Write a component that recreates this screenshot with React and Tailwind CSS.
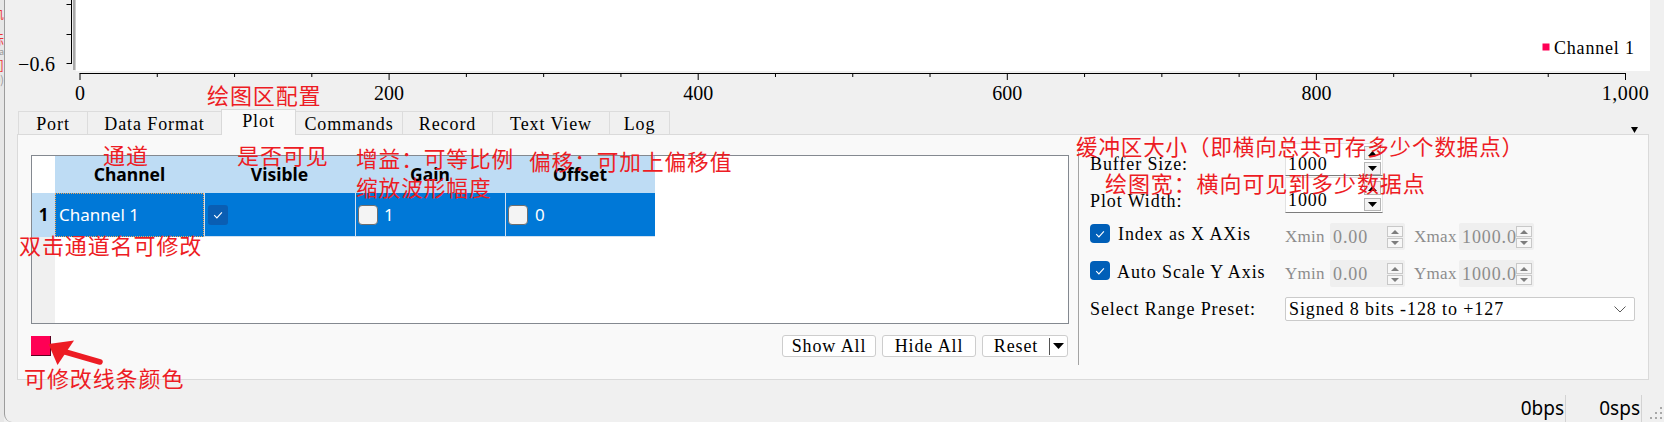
import React from "react";

const SERIF = "font-['Liberation_Serif','Noto_Sans_CJK_SC',serif] tracking-[0.9px]";
const CJK = "font-['Noto_Sans_CJK_SC','Noto_Sans',sans-serif]";
const SANS = "font-['Noto_Sans','Noto_Sans_CJK_SC',sans-serif]";

function Tri({ dir = "down", color = "#000", w = 9, h = 5 }) {
  const pts = dir === "down" ? `0,0 ${w},0 ${w / 2},${h}` : `0,${h} ${w},${h} ${w / 2},0`;
  return (
    <svg width={w} height={h} viewBox={`0 0 ${w} ${h}`}>
      <polygon points={pts} fill={color} />
    </svg>
  );
}

function Check({ children }) {
  return (
    <svg viewBox="0 0 20 20" width="20" height="20">
      <path d="M6.2 10.2 L8.9 12.9 L13.9 7.4" fill="none" stroke="#fff" strokeWidth="1.1" />
      {children}
    </svg>
  );
}

function Chart() {
  const ticks = Array.from({ length: 21 }, (_, i) => 80 + i * 77.275);
  const labels = ["0", "200", "400", "600", "800", "1,000"];
  return (
    <svg width="1659" height="109" viewBox="5 0 1659 109" className="block shrink-0">
      <rect x="76" y="0" width="1574" height="71" fill="#fff" />
      <rect x="73" y="0" width="2.5" height="70" fill="#a9a9a9" />
      <line x1="71.5" y1="0" x2="71.5" y2="64" stroke="#000" strokeWidth="1" />
      {[4.5, 34.5, 63.5].map((y) => (
        <line key={y} x1="66.5" y1={y} x2="72" y2={y} stroke="#000" strokeWidth="1" />
      ))}
      <text x="18" y="71" fontFamily="Liberation Serif" fontSize="20" textLength="38" lengthAdjust="spacing">
        −0.6
      </text>
      <line x1="79.5" y1="73.5" x2="1626" y2="73.5" stroke="#000" strokeWidth="1" />
      {ticks.map((x, i) => (
        <line key={i} x1={x} y1="73.5" x2={x} y2={i % 4 === 0 ? 80 : 77} stroke="#000" strokeWidth="1" />
      ))}
      {labels.map((t, i) => (
        <text
          key={t}
          x={ticks[i * 4]}
          y="100"
          textAnchor="middle"
          fontFamily="Liberation Serif"
          fontSize="20"
          letterSpacing={i === 5 ? "0.5" : "0"}
        >
          {t}
        </text>
      ))}
      <rect x="1542.5" y="43.5" width="7" height="7" fill="#ff0055" />
      <text x="1554" y="53.5" fontFamily="Liberation Serif" fontSize="18" letterSpacing="0.8">
        Channel 1
      </text>
    </svg>
  );
}

function Tab({ label, w, active, first }) {
  if (active) {
    return (
      <div
        className={`${w} h-[26px] -mb-[1px] relative z-10 bg-[#f9f9f9] border-t border-r border-l -ml-px border-[#d9d9d9] flex justify-center pt-[2px] leading-[18px] ${SERIF} text-[18px]`}
      >
        {label}
      </div>
    );
  }
  return (
    <div
      className={`${w} h-[23px] bg-[#f0f0f0] border-t border-r ${first ? "border-l" : ""} border-[#dcdcdc] flex justify-center pt-[3px] leading-[18px] ${SERIF} text-[18px]`}
    >
      {label}
    </div>
  );
}

function SpinButtons({ gap }) {
  return (
    <div className={`w-[17px] flex flex-col ${gap}`}>
      <div className="h-[14px] bg-[#f3f3f3] border border-[#b5b5b5] flex items-center justify-center">
        <Tri dir="up" w={9} h={5} />
      </div>
      <div className="h-[13px] bg-[#f3f3f3] border border-[#b5b5b5] flex items-center justify-center">
        <Tri dir="down" w={9} h={5} />
      </div>
    </div>
  );
}

function DisabledSpin({ value }) {
  return (
    <div className="w-[75px] h-[27px] bg-[#efefef] rounded-[2px] flex">
      <div className="flex-1 overflow-hidden whitespace-nowrap pl-[3px] pt-[5px] leading-[18px] text-[#8c8c8c]">{value}</div>
      <div className="w-[16px] mr-[2px] pt-[3px] flex flex-col gap-[1px]">
        <div className="h-[11px] bg-[#f7f7f7] border border-[#c8c8c8] flex items-center justify-center">
          <Tri dir="up" color="#7d7d7d" w={8} h={4} />
        </div>
        <div className="h-[10px] bg-[#f7f7f7] border border-[#c8c8c8] flex items-center justify-center">
          <Tri dir="down" color="#7d7d7d" w={8} h={4} />
        </div>
      </div>
    </div>
  );
}

function BlueCheck() {
  return (
    <div className="w-[20px] h-[19px] rounded-[4px] bg-[#005fb8] flex items-center justify-center shrink-0">
      <Check />
    </div>
  );
}

function Btn({ children, w }) {
  return (
    <div className={`${w} h-[22px] bg-white border border-[#cdcdcd] rounded-[3px] flex items-center justify-center leading-[18px]`}>
      {children}
    </div>
  );
}

function Note({ children, pos, size = "text-[22px]" }) {
  return (
    <span className={`absolute ${pos} ${CJK} ${size} leading-none text-[#ed1c24] whitespace-nowrap`}>{children}</span>
  );
}

function RangeLabel({ children, extra = "" }) {
  return (
    <span className={`${extra} w-[45px] mt-[5px] leading-[18px] text-[17px] tracking-[0.3px] text-[#8c8c8c]`}>{children}</span>
  );
}

export default function App() {
  return (
    <div className={`relative w-[1664px] h-[422px] overflow-hidden bg-[#f0f0f0] flex text-black ${SERIF} text-[18px]`}>
      {/* edge of a neighbouring window */}
      <div className={`w-[4px] h-full bg-[#e7e7e7] overflow-hidden flex flex-col items-end ${CJK} text-[13px] leading-[13px] tracking-normal`}>
        <span className="mt-[6px] text-[#e33]">轨</span>
        <span className="mt-[13px] text-[#e33]">标</span>
        <span className="mt-[2px] text-[#999] text-[9px] leading-[9px]">pa</span>
        <span className="mt-[2px] text-[#e33]">]</span>
        <span className="mt-[3px] text-[#999] text-[11px] leading-[11px]">0)</span>
      </div>

      <div className="flex-1 h-full border-l border-[#9c9c9c] rounded-bl-[8px] flex flex-col">
        <Chart />

        {/* tabs */}
        <div className="h-[25px] flex items-end pl-[13px] shrink-0">
          <Tab label="Port" w="w-[70px]" first />
          <Tab label="Data Format" w="w-[134px]" />
          <Tab label="Plot" w="w-[75px]" active />
          <Tab label="Commands" w="w-[107px]" />
          <Tab label="Record" w="w-[90px]" />
          <Tab label="Text View" w="w-[117px]" />
          <Tab label="Log" w="w-[60px]" />
          <div className="ml-auto mr-[26px] mb-[1px] self-end">
            <Tri dir="down" w={7} h={6} />
          </div>
        </div>

        {/* plot settings panel */}
        <div className="ml-[12px] w-[1632px] h-[246px] shrink-0 border border-[#dadada] bg-[#f9f9f9] flex">
          {/* channel table */}
          <div className="w-[1060px] pl-[13px] pt-[20px] flex flex-col">
            <div className="w-[1038px] h-[169px] border border-[#848990] bg-white flex flex-col">
              <div className={`h-[37px] flex ${SANS} tracking-normal text-[17.5px] font-bold`}>
                <div className="w-[23px] bg-white" />
                <div className="w-[149px] bg-[#bedcf4] flex items-center justify-center">Channel</div>
                <div className="w-[151px] bg-[#bedcf4] flex items-center justify-center">Visible</div>
                <div className="w-[150px] bg-[#bedcf4] flex items-center justify-center">Gain</div>
                <div className="w-[150px] bg-[#bedcf4] flex items-center justify-center">Offset</div>
              </div>
              <div className={`h-[44px] flex ${SANS} tracking-normal text-[17px]`}>
                <div className="w-[23px] bg-[#bedcf4] flex items-center justify-center font-bold">1</div>
                <div className="w-[149px] bg-[#0078d7] border border-dotted border-[#f2a65a] flex items-center pl-[3px] text-white">
                  Channel 1
                </div>
                <div className="w-[151px] bg-[#0078d7] border-l border-b border-[#cfe0f1] flex items-center pl-[3px]">
                  <div className="w-[20px] h-[20px] rounded-[3px] bg-[#0a5eb3] flex items-center justify-center">
                    <Check />
                  </div>
                </div>
                <div className="w-[150px] bg-[#0078d7] border-l border-b border-[#cfe0f1] flex items-center pl-[2px] text-white">
                  <div className="w-[20px] h-[20px] rounded-[4px] bg-[#f4f4f4] border border-[#6f6f6f]" />
                  <span className="ml-[6px]">1</span>
                </div>
                <div className="w-[150px] bg-[#0078d7] border-l border-b border-[#cfe0f1] flex items-center pl-[2px] text-white">
                  <div className="w-[20px] h-[20px] rounded-[4px] bg-[#f4f4f4] border border-[#6f6f6f]" />
                  <span className="ml-[7px]">0</span>
                </div>
              </div>
              <div className="flex-1 flex">
                <div className="w-[23px] bg-[#f0f0f0]" />
              </div>
            </div>

            <div className="mt-[11px] h-[22px] w-[1038px] flex items-center">
              <div className="w-[20px] h-[20px] bg-[#ff0055] border-r border-b border-[#5c0020]" />
              <div className="ml-auto mr-[1px] flex gap-[6px]">
                <Btn w="w-[94px]">Show All</Btn>
                <Btn w="w-[94px]">Hide All</Btn>
                <div className="w-[86px] h-[22px] bg-white border border-[#cdcdcd] rounded-[3px] flex items-center leading-[18px]">
                  <div className="w-[66px] text-center">Reset</div>
                  <div className="w-px h-[17px] bg-[#555]" />
                  <div className="flex-1 flex justify-center">
                    <Tri dir="down" w={11} h={6} />
                  </div>
                </div>
              </div>
            </div>
          </div>

          <div className="mt-[17px] w-px h-[213px] bg-[#a3a3a3]" />

          {/* plot settings */}
          <div className="pl-[11px] flex flex-col">
            <div className="mt-[8px] h-[33px] flex items-start">
              <span className="w-[195px] mt-[12px] leading-[18px]">Buffer Size:</span>
              <div className="w-[98px] h-[33px] flex bg-white border border-[#e2e2e2] border-b-[#7d7d7d]">
                <div className="flex-1 pl-[2px] pt-[11px] leading-[18px]">1000</div>
                <div className="pt-[2px] mr-[1px]">
                  <SpinButtons gap="gap-[2px]" />
                </div>
              </div>
            </div>
            <div className="mt-[1px] h-[36px] flex items-start">
              <span className="w-[195px] mt-[15px] leading-[18px]">Plot Width:</span>
              <div className="w-[98px] h-[36px] flex bg-white border border-[#e2e2e2] border-b-[#7d7d7d]">
                <div className="flex-1 pl-[2px] pt-[13px] leading-[18px]">1000</div>
                <div className="pt-[3px] mr-[1px]">
                  <SpinButtons gap="gap-[3px]" />
                </div>
              </div>
            </div>
            <div className="mt-[10px] h-[27px] flex items-start">
              <div className="w-[195px] flex items-start">
                <div className="mt-[1px]">
                  <BlueCheck />
                </div>
                <span className="ml-[8px] mt-[2px] leading-[18px]">Index as X AXis</span>
              </div>
              <RangeLabel>Xmin</RangeLabel>
              <DisabledSpin value="0.00" />
              <RangeLabel extra="ml-[9px]">Xmax</RangeLabel>
              <DisabledSpin value="1000.0" />
            </div>
            <div className="mt-[10px] h-[27px] flex items-start">
              <div className="w-[195px] flex items-start">
                <div className="mt-[1px]">
                  <BlueCheck />
                </div>
                <span className="ml-[7px] mt-[3px] leading-[18px] whitespace-nowrap">Auto Scale Y Axis</span>
              </div>
              <RangeLabel>Ymin</RangeLabel>
              <DisabledSpin value="0.00" />
              <RangeLabel extra="ml-[9px]">Ymax</RangeLabel>
              <DisabledSpin value="1000.0" />
            </div>
            <div className="mt-[10px] h-[24px] flex items-center">
              <span className="w-[195px] leading-[18px] whitespace-nowrap">Select Range Preset:</span>
              <div className="w-[350px] h-[24px] bg-white border border-[#cbcbcb] rounded-[2px] flex items-center pl-[3px] leading-[18px]">
                <span className="whitespace-nowrap">Signed 8 bits -128 to +127</span>
                <svg className="ml-auto mr-[8px]" width="12" height="7" viewBox="0 0 12 7">
                  <path d="M0.5 0.5 L6 6 L11.5 0.5" fill="none" stroke="#5a5a5a" strokeWidth="1" />
                </svg>
              </div>
            </div>
          </div>
        </div>

        {/* status bar */}
        <div className={`mt-[15px] h-[27px] shrink-0 flex items-stretch justify-end ${SANS} tracking-normal text-[19px]`}>
          <span className="pr-[1px] flex items-center">0bps</span>
          <div className="w-px bg-[#d3d3d3]" />
          <span className="w-[75px] pr-[1px] flex items-center justify-end">0sps</span>
          <div className="w-px bg-[#d3d3d3]" />
          <div className="w-[22px] flex items-end justify-end pb-[2px] pr-[1px]">
            <svg width="14" height="14" viewBox="0 0 14 14">
              {[
                [11, 1],
                [11, 6],
                [6, 6],
                [11, 11],
                [6, 11],
                [1, 11],
              ].map(([x, y]) => (
                <rect key={`${x}-${y}`} x={x} y={y} width="2" height="2" fill="#a8a8a8" />
              ))}
            </svg>
          </div>
        </div>
      </div>

      {/* red annotations drawn over the screenshot */}
      <Note pos="left-[207px] top-[83px]">绘图区配置</Note>
      <Note pos="left-[103px] top-[143px]">通道</Note>
      <Note pos="left-[237px] top-[143px]">是否可见</Note>
      <Note pos="left-[356px] top-[147px]" size="text-[21.7px]">增益：可等比例</Note>
      <Note pos="left-[356px] top-[176px]" size="text-[21.7px]">缩放波形幅度</Note>
      <Note pos="left-[529px] top-[150px]" size="text-[21.7px]">偏移：可加上偏移值</Note>
      <Note pos="left-[19px] top-[233px]">双击通道名可修改</Note>
      <Note pos="left-[24px] top-[366px]">可修改线条颜色</Note>
      <Note pos="left-[1076px] top-[135px]" size="text-[21.5px]">缓冲区大小（即横向总共可存多少个数据点）</Note>
      <Note pos="left-[1105px] top-[171px]">绘图宽：横向可见到多少数据点</Note>
      <svg className="absolute left-[40px] top-[335px]" width="70" height="35" viewBox="40 335 70 35">
        <path d="M62 351 L100 362" stroke="#ed1c24" strokeWidth="5.5" strokeLinecap="round" />
        <polygon points="48.5,344 74,340.5 57.5,365" fill="#ed1c24" />
      </svg>
    </div>
  );
}
